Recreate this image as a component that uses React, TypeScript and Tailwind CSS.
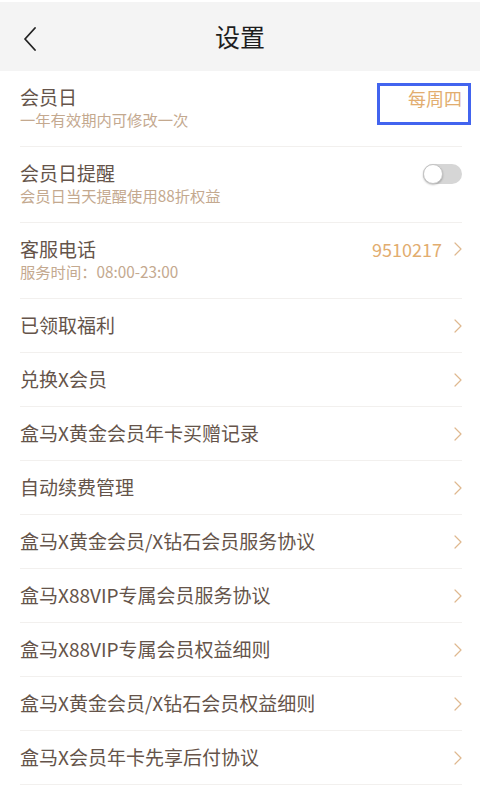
import { ReactNode } from "react";

const FONT = { fontFamily: '"Noto Sans CJK SC", "Noto Sans", sans-serif' };

const LINKS = [
  "已领取福利",
  "兑换X会员",
  "盒马X黄金会员年卡买赠记录",
  "自动续费管理",
  "盒马X黄金会员/X钻石会员服务协议",
  "盒马X88VIP专属会员服务协议",
  "盒马X88VIP专属会员权益细则",
  "盒马X黄金会员/X钻石会员权益细则",
  "盒马X会员年卡先享后付协议",
];

function Chevron() {
  return (
    <svg width="8" height="14" viewBox="0 0 8 14" className="shrink-0">
      <path d="M1 1l6 6-6 6" fill="none" stroke="#dfb88f" strokeWidth="1.2" strokeLinecap="round" strokeLinejoin="round" />
    </svg>
  );
}

function TwoLineRow({ title, sub, right }: { title: string; sub: string; right: ReactNode }) {
  return (
    <div className="pl-[20px] pr-[18px]">
      <div className="flex items-start justify-between pt-[14px] pb-[16px] border-b border-[#f2f0ee]">
        <div className="flex flex-col">
          <span className="text-[19px] leading-[24px] text-[#65544a]">{title}</span>
          <span className="text-[15.3px] leading-[21px] text-[#c4a98f]">{sub}</span>
        </div>
        {right}
      </div>
    </div>
  );
}

function LinkRow({ label }: { label: string }) {
  return (
    <div className="pl-[20px] pr-[18px]">
      <div className="flex h-[54px] items-center justify-between border-b border-[#f2f0ee]">
        <span className="text-[19px] text-[#65544a]">{label}</span>
        <Chevron />
      </div>
    </div>
  );
}

export default function App() {
  return (
    <div className="relative min-h-[798px] w-[480px] overflow-hidden bg-white pt-[2px]" style={FONT}>
      {/* header */}
      <div className="relative flex h-[69px] items-center justify-center bg-[#f4f4f4]">
        <svg width="14" height="24" viewBox="0 0 14 24" className="absolute left-[23px] top-[25px]">
          <path d="M12 1L2 12l10 11" fill="none" stroke="#222" strokeWidth="1.8" strokeLinecap="round" strokeLinejoin="round" />
        </svg>
        <span className="text-[25px] text-[#1e1e1e]">设置</span>
      </div>

      <TwoLineRow
        title="会员日"
        sub="一年有效期内可修改一次"
        right={<span className="mt-[1px] text-[18px] leading-[24px] text-[#e2ad6f]">每周四</span>}
      />
      <TwoLineRow
        title="会员日提醒"
        sub="会员日当天提醒使用88折权益"
        right={
          <div className="relative mt-[3px] h-[20px] w-[39px] rounded-full bg-[#d6d6d6]">
            <div className="absolute left-0 top-0 h-[20px] w-[20px] rounded-full border border-[#c4c4c4] bg-white shadow-[0_1px_2px_rgba(0,0,0,0.25)]" />
          </div>
        }
      />
      <TwoLineRow
        title="客服电话"
        sub="服务时间：08:00-23:00"
        right={
          <div className="flex items-center gap-[12px]">
            <span className="text-[18px] leading-[24px] text-[#e2ad6f]">9510217</span>
            <Chevron />
          </div>
        }
      />
      {LINKS.map((l) => (
        <LinkRow key={l} label={l} />
      ))}

      {/* highlight annotation */}
      <div className="absolute left-[377px] top-[83px] h-[42px] w-[94px] border-[3px] border-[#4264ef]" />
    </div>
  );
}
